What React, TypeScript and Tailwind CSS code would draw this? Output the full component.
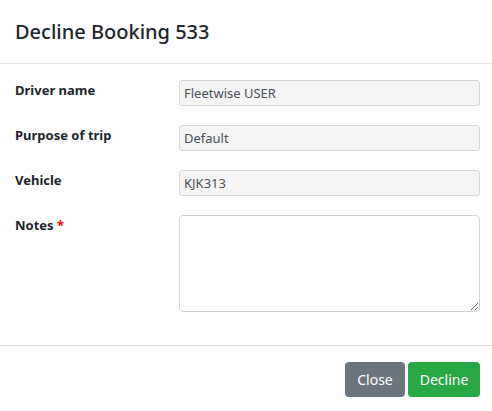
import React, { useState } from 'react';

const FIELDS = [
    { label: "Driver name", value: "Fleetwise USER" },
    { label: "Purpose of trip", value: "Default" },
    { label: "Vehicle", value: "KJK313" },
];

const App: React.FC = () => {
    const [notes, setNotes] = useState("");

    return (
        <div className="w-[492px] h-[411px] bg-white text-[#212529] overflow-hidden" style={{ fontFamily: '"Segoe UI", "Noto Sans", "Open Sans", sans-serif' }}>
            {/* Header */}
            <div className="h-[64px] px-[15px] flex items-center border-b border-[#dee2e6]">
                <h5 className="text-[20px] font-medium leading-[30px] text-[#212529]">Decline Booking 533</h5>
            </div>

            {/* Body */}
            <div className="pt-[16px] pl-[15px] pr-[12px] h-[281px]">
                {FIELDS.map((f) => (
                    <div key={f.label} className="flex mb-[19px]">
                        <label className="w-[164px] shrink-0 text-[13px] font-bold leading-[20px]">{f.label}</label>
                        <input
                            type="text"
                            disabled
                            value={f.value}
                            className="flex-1 h-[26px] px-[4px] bg-[#f5f5f5] border border-[#d6d6d6] rounded-[3px] text-[13px] text-[#495057] outline-none"
                        />
                    </div>
                ))}
                <div className="flex">
                    <label className="w-[164px] shrink-0 text-[13px] font-bold leading-[20px]">
                        Notes <span className="text-[#ff0000]">*</span>
                    </label>
                    <textarea
                        value={notes}
                        onChange={(e) => setNotes(e.target.value)}
                        className="flex-1 h-[97px] bg-white border border-[#ced4da] rounded-[4px] text-[13px] outline-none block"
                    />
                </div>
            </div>

            {/* Footer */}
            <div className="border-t border-[#dee2e6] pt-[16px] pr-[12px] flex justify-end gap-[3px]">
                <button className="h-[35px] w-[60px] bg-[#6c757d] text-white text-[14px] rounded-[4px]">Close</button>
                <button className="h-[35px] w-[72px] bg-[#28a745] text-white text-[14px] rounded-[4px]">Decline</button>
            </div>
        </div>
    );
};

export default App;
